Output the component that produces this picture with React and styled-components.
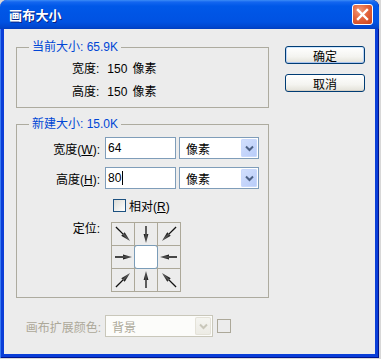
import React from 'react';
import styled, { createGlobalStyle } from 'styled-components';

const Global = createGlobalStyle`
  html, body { margin: 0; padding: 0; background: #d8d8d8; }
  body {
    font-family: "Liberation Sans", "Noto Sans CJK SC", sans-serif;
    font-size: 12px;
    color: #000;
  }
`;

const Window = styled.div`
  width: 379px;
  height: 358px;
  box-sizing: border-box;
  display: flex;
  flex-direction: column;
  background: #0A3ED8;
  border-radius: 7px 7px 0 0;
  padding: 0 4px 4px;
  overflow: hidden;
  box-shadow: inset 1px 0 0 #3A7BF2, inset -1px 0 0 #00138C, inset 0 -1px 0 #00138C;
`;

const TitleBar = styled.div`
  margin: 0 -4px;
  height: 29px;
  flex: none;
  display: flex;
  align-items: center;
  justify-content: space-between;
  padding: 0 6px 0 9px;
  box-sizing: border-box;
  border-radius: 7px 7px 0 0;
  background: linear-gradient(#3C8CF6 0px, #1466F0 2px, #0058E8 6px, #0055E5 14px, #0052E2 22px, #0046CF 27px, #003DBF 29px);
`;

const Title = styled.span`
  color: #fff;
  font-family: "Noto Sans CJK SC", sans-serif;
  font-weight: 700;
  font-size: 13px;
  letter-spacing: 0.2px;
  text-shadow: 1px 1px 0 #0A1F80;
`;

const CloseBtn = styled.div`
  width: 21px;
  height: 21px;
  box-sizing: border-box;
  border: 1px solid #fff;
  border-radius: 3px;
  background: radial-gradient(circle at 35% 30%, #F29A7A 0%, #E3643C 45%, #C8401A 100%);
  display: flex;
  align-items: center;
  justify-content: center;
`;

const Client = styled.div`
  flex: 1;
  background: #ECECEC;
  display: flex;
  padding: 0 0 0 12px;
  gap: 16px;
`;

const LeftCol = styled.div`
  width: 253px;
  display: flex;
  flex-direction: column;
  padding-top: 18px;
`;

const Group = styled.div`
  position: relative;
  box-sizing: border-box;
  height: ${p => p.$h}px;
  margin-top: ${p => p.$mt || 0}px;
  border: 1px solid #ADAB9F;
  padding-top: ${p => p.$pt}px;
`;

const Legend = styled.span`
  position: absolute;
  top: -8px;
  left: 12px;
  padding: 0 3px 0 3px;
  line-height: 15px;
  background: #ECECEC;
  color: #0046D5;
`;

const InfoRow = styled.div`
  height: 23px;
  line-height: 23px;
  padding-left: 55px;
  white-space: nowrap;
`;

const Value = styled.span`
  margin-left: ${p => p.$ml}px;
`;

const Form = styled.div`
  display: grid;
  grid-template-columns: 83px auto;
  column-gap: 5px;
  row-gap: 8px;
  align-items: center;
`;

const Label = styled.label`
  text-align: right;
  white-space: nowrap;
  color: ${p => (p.$disabled ? '#ACA899' : '#000')};
  align-self: ${p => (p.$top ? 'start' : 'center')};
  line-height: ${p => (p.$top ? '12px' : 'normal')};
  margin-top: ${p => (p.$top ? '1px' : '0')};
`;

const Controls = styled.div`
  display: flex;
  align-items: center;
  gap: ${p => p.$gap || 0}px;
  padding-left: ${p => p.$pl || 0}px;
`;

const TextBox = styled.div`
  width: 71px;
  height: 22px;
  box-sizing: border-box;
  border: 1px solid #7F9DB9;
  background: #fff;
  padding-left: 2px;
  display: flex;
  align-items: center;
`;

const Caret = styled.span`
  display: inline-block;
  width: 1px;
  height: 14px;
  background: #000;
  margin-left: 1px;
`;

const Select = styled.div`
  width: ${p => p.$w}px;
  height: 22px;
  box-sizing: border-box;
  border: 1px solid ${p => (p.$disabled ? '#C9C7BA' : '#7F9DB9')};
  background: ${p => (p.$disabled ? '#FCFCFA' : '#fff')};
  display: flex;
  align-items: stretch;
  padding: 1px;
  color: ${p => (p.$disabled ? '#ACA899' : '#000')};
`;

const SelectText = styled.span`
  flex: 1;
  display: flex;
  align-items: center;
  padding-left: 5px;
`;

const DropBtn = styled.span`
  width: 16px;
  border-radius: 2px;
  display: flex;
  align-items: center;
  justify-content: center;
  background: ${p =>
    p.$disabled
      ? 'linear-gradient(#F5F5F1, #ECEBE4)'
      : 'linear-gradient(135deg, #D3E0FD, #B7CBF9)'};
  box-shadow: ${p => (p.$disabled ? 'inset 0 0 0 1px #E4E2D8' : 'inset 0 0 0 1px #C9D8FC')};
`;

const CheckBox = styled.span`
  width: 13px;
  height: 13px;
  box-sizing: border-box;
  border: 1px solid ${p => (p.$disabled ? '#ACA899' : '#1C5180')};
  background: ${p => (p.$disabled ? 'transparent' : 'linear-gradient(135deg, #DCDCD6, #FFFFFF)')};
  flex: none;
`;

const Anchor = styled.div`
  width: 70px;
  height: 70px;
  display: grid;
  grid-template-columns: repeat(3, 22px);
  grid-template-rows: repeat(3, 22px);
  gap: 1px;
  padding: 1px;
  box-sizing: border-box;
  background: #ACA899;
  margin-left: 6px;
`;

const Cell = styled.div`
  background: ${p => (p.$center ? '#fff' : '#ECECEC')};
  display: flex;
  align-items: center;
  justify-content: center;
  ${p => (p.$center ? 'border: 1px solid #7A9CB8; border-radius: 3px; margin: -1px; background: #fff;' : '')}
`;

const BottomRow = styled.div`
  display: grid;
  grid-template-columns: 85px auto auto;
  column-gap: 4px;
  align-items: center;
  justify-content: start;
  margin-top: 17px;
`;

const RightCol = styled.div`
  display: flex;
  flex-direction: column;
  gap: 10px;
  padding-top: 17px;
`;

const Button = styled.div`
  width: 80px;
  height: 18px;
  box-sizing: border-box;
  border: 1px solid #003C74;
  border-radius: 3px;
  background: linear-gradient(#FFFFFF 0%, #F4F4F0 60%, #E3E1D8 100%);
  display: flex;
  align-items: center;
  justify-content: center;
  font-family: "Noto Sans CJK SC", sans-serif;
  font-size: 12px;
  box-shadow: ${p => (p.$default ? 'inset 0 1px 0 #CEE7FF, inset 0 -1px 0 #A9C4EF, inset 1px 0 0 #BCD4F6, inset -1px 0 0 #BCD4F6' : 'inset 0 -1px 0 #D6D0C5')};
`;

const U = styled.span`
  text-decoration: underline;
`;

const Arrow = ({ angle }) => (
  <svg width="22" height="22" viewBox="0 0 22 22">
    <defs>
      <linearGradient id={`ag${angle}`} x1="0" y1="0" x2="1" y2="0">
        <stop offset="0" stopColor="#000" />
        <stop offset="0.5" stopColor="#555" />
        <stop offset="1" stopColor="#111" />
      </linearGradient>
    </defs>
    <g transform={`rotate(${angle} 11 11)`}>
      <line x1="11" y1={angle % 90 === 0 ? 3 : 1} x2="11" y2="14" stroke="#111" strokeWidth="1.3" />
      <polygon points={`8.6,11 13.4,11 11,${angle % 90 === 0 ? 20 : 21}`} fill={`url(#ag${angle})`} />
    </g>
  </svg>
);

const Chevron = ({ color }) => (
  <svg width="9" height="7" viewBox="0 0 9 7">
    <path d="M1 1.5 L4.5 5 L8 1.5" fill="none" stroke={color} strokeWidth="2" />
  </svg>
);

export default function App() {
  const arrows = [135 + 180, 0, 45, 270, null, 90, 225 , 180, 135];
  // angle: 0 points down. rotate positive = clockwise
  const cellAngles = [-45, 0, 45, -90, null, 90, -135, 180, 135];
  return (
    <>
      <Global />
      <Window>
        <TitleBar>
          <Title>画布大小</Title>
          <CloseBtn>
            <svg width="13" height="13" viewBox="0 0 13 13">
              <path d="M2 2 L11 11 M11 2 L2 11" stroke="#fff" strokeWidth="2.4" strokeLinecap="square" />
            </svg>
          </CloseBtn>
        </TitleBar>
        <Client>
          <LeftCol>
            <Group $h={61} $pt={10}>
              <Legend>当前大小: 65.9K</Legend>
              <InfoRow>宽度:<Value $ml={8}>150</Value><Value $ml={5}>像素</Value></InfoRow>
              <InfoRow>高度:<Value $ml={8}>150</Value><Value $ml={5}>像素</Value></InfoRow>
            </Group>
            <Group $h={174} $mt={16} $pt={12}>
              <Legend>新建大小: 15.0K</Legend>
              <Form>
                <Label>宽度(<U>W</U>):</Label>
                <Controls $gap={3}>
                  <TextBox>64</TextBox>
                  <Select $w={80}>
                    <SelectText>像素</SelectText>
                    <DropBtn><Chevron color="#4D6185" /></DropBtn>
                  </Select>
                </Controls>
                <Label>高度(<U>H</U>):</Label>
                <Controls $gap={3}>
                  <TextBox>80<Caret /></TextBox>
                  <Select $w={80}>
                    <SelectText>像素</SelectText>
                    <DropBtn><Chevron color="#4D6185" /></DropBtn>
                  </Select>
                </Controls>
                <span />
                <Controls $gap={3} $pl={8}>
                  <CheckBox />
                  <span>相对(<U>R</U>)</span>
                </Controls>
                <Label $top>定位:</Label>
                <Controls>
                  <Anchor>
                    {cellAngles.map((a, i) => (
                      <Cell key={i} $center={a === null}>
                        {a !== null && <Arrow angle={a} />}
                      </Cell>
                    ))}
                  </Anchor>
                </Controls>
              </Form>
            </Group>
            <BottomRow>
              <Label $disabled>画布扩展颜色:</Label>
              <Select $w={108} $disabled>
                <SelectText>背景</SelectText>
                <DropBtn $disabled><Chevron color="#C9C7BA" /></DropBtn>
              </Select>
              <CheckBox $disabled style={{ width: 14, height: 14 }} />
            </BottomRow>
          </LeftCol>
          <RightCol>
            <Button $default>确定</Button>
            <Button>取消</Button>
          </RightCol>
        </Client>
      </Window>
    </>
  );
}
